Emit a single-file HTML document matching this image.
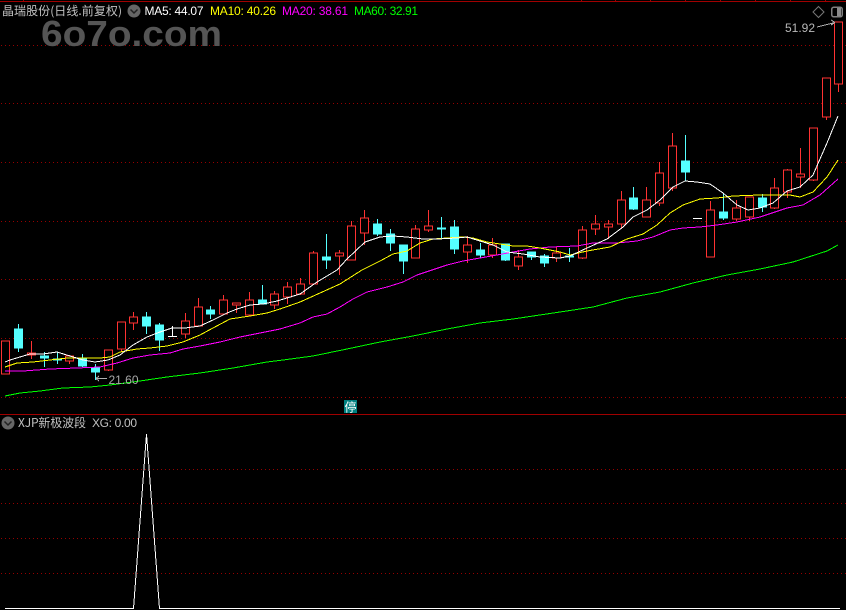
<!DOCTYPE html>
<html lang="zh">
<head>
<meta charset="utf-8">
<title>晶瑞股份</title>
<style>
html,body{margin:0;padding:0;background:#000;width:846px;height:610px;overflow:hidden}
svg{display:block}
text{font-family:"Liberation Sans","WenQuanYi Zen Hei","Noto Sans CJK SC",sans-serif;font-size:12px}
.c{font-family:"WenQuanYi Zen Hei","Noto Sans CJK SC","Liberation Sans",sans-serif}
</style>
</head>
<body>
<svg width="846" height="610" viewBox="0 0 846 610" xmlns="http://www.w3.org/2000/svg">
<defs>
<pattern id="d" x="0" y="0" width="4" height="1" patternUnits="userSpaceOnUse"><rect x="1" y="0" width="1" height="1" fill="#960000" shape-rendering="crispEdges"/></pattern>
</defs>
<rect width="846" height="610" fill="#000"/>
<g shape-rendering="crispEdges">
<path d="M0 1.5H846M23.5 0V1M581.5 0V1M615.5 0V1M650.5 0V1M685.5 0V1M720.5 0V1M755.5 0V1M790.5 0V1M825.5 0V1M0 414.5H846" stroke="#a00000" fill="none"/>
<g fill="url(#d)">
<rect x="0" y="45" width="846" height="1"/>
<rect x="0" y="103" width="846" height="1"/>
<rect x="0" y="162" width="846" height="1"/>
<rect x="0" y="221" width="846" height="1"/>
<rect x="0" y="279" width="846" height="1"/>
<rect x="0" y="338" width="846" height="1"/>
<rect x="0" y="397" width="846" height="1"/>
<rect x="0" y="469" width="846" height="1"/>
<rect x="0" y="503" width="846" height="1"/>
<rect x="0" y="538" width="846" height="1"/>
<rect x="0" y="573" width="846" height="1"/>
</g>
</g>
<text x="41" y="46" fill="#555" textLength="181" lengthAdjust="spacingAndGlyphs" style="font-size:36px;font-weight:bold">6o7o.com</text>

<g shape-rendering="crispEdges" stroke-width="1">
<path stroke="#ff3232" fill="none" d="M31.5 341V359M69.5 355V364M108.5 350V371M121.5 322V352M133.5 312V330M185.5 313V338M198.5 298V327M223.5 295V314M236.5 303V313M249.5 292V316M274.5 291V309M287.5 282V304M300.5 278V295M313.5 251V285M339.5 250V275M351.5 221V260M364.5 210V245M415.5 225V258M428.5 210V232M467.5 236V263M492.5 238V258M518.5 250V270M556.5 247V262M582.5 226V259M595.5 215V235M608.5 220V239M621.5 191V229M646.5 187V217M659.5 162V206M672.5 133V191M710.5 201V257M736.5 200V221M749.5 197V221M774.5 178V209M787.5 169V198M800.5 148V188M813.5 128V181M826.5 78V120M838.5 22V92"/>
<path stroke="#ff3232" fill="#000" d="M1.5 341h8v33h-8zM27.5 353h8v2h-8zM65.5 356h8v5h-8zM104.5 350h8v20h-8zM117.5 322h8v27h-8zM129.5 317h8v6h-8zM181.5 321h8v13h-8zM194.5 307h8v19h-8zM219.5 300h8v14h-8zM232.5 303h8v2h-8zM245.5 300h8v15h-8zM270.5 294h8v11h-8zM283.5 287h8v10h-8zM296.5 284h8v10h-8zM309.5 253h8v31h-8zM335.5 253h8v3h-8zM347.5 226h8v34h-8zM360.5 218h8v15h-8zM411.5 229h8v29h-8zM424.5 226h8v4h-8zM463.5 245h8v7h-8zM488.5 245h8v10h-8zM514.5 257h8v9h-8zM552.5 253h8v5h-8zM578.5 230h8v28h-8zM591.5 224h8v5h-8zM604.5 224h8v3h-8zM617.5 200h8v24h-8zM642.5 200h8v17h-8zM655.5 173h8v30h-8zM668.5 146h8v42h-8zM706.5 210h8v47h-8zM732.5 208h8v11h-8zM745.5 197h8v20h-8zM770.5 188h8v20h-8zM783.5 170h8v22h-8zM796.5 174h8v3h-8zM809.5 128h8v52h-8zM822.5 78h8v39h-8zM834.5 22h8v62h-8z"/>
<path stroke="#55ffff" fill="none" d="M18.5 324V352M44.5 352V367M57.5 352V364M82.5 354V367M95.5 364V380M146.5 312V334M159.5 323V351M210.5 306V319M262.5 285V304M326.5 234V269M377.5 219V236M390.5 229V251M403.5 245V274M441.5 217V239M454.5 220V254M480.5 243V258M505.5 244V261M531.5 252V260M544.5 254V267M569.5 248V262M633.5 187V210M685.5 135V181M723.5 193V220M762.5 194V212"/>
<path stroke="#55ffff" fill="#55ffff" d="M14.5 329h8v19h-8zM40.5 356h8v2h-8zM53.5 359h8v1h-8zM78.5 359h8v7h-8zM91.5 368h8v4h-8zM142.5 317h8v9h-8zM155.5 325h8v15h-8zM206.5 310h8v4h-8zM258.5 300h8v4h-8zM322.5 257h8v3h-8zM373.5 224h8v10h-8zM386.5 234h8v9h-8zM399.5 245h8v16h-8zM437.5 228h8v1h-8zM450.5 227h8v22h-8zM476.5 250h8v5h-8zM501.5 244h8v16h-8zM527.5 252h8v5h-8zM540.5 256h8v7h-8zM565.5 256h8v1h-8zM629.5 198h8v11h-8zM681.5 161h8v11h-8zM719.5 212h8v6h-8zM758.5 198h8v9h-8z"/>
<path stroke="#fff" fill="none" d="M172.5 326V336M168 336.5H177M693 218.5H702"/>

<polyline fill="none" stroke="#00ff00" points="5,396 20,393 40,391 63,388 90,387 110,385 133,382 167,377 200,373 233,368 267,362 283,360 313,356 347,349 380,342 413,336 447,329 480,323 513,319 560,312 593,307 627,298 660,292 693,283 727,275 760,269 793,262 827,251 838,245"/>
<polyline fill="none" stroke="#ff00ff" points="5,371 23,371 50,369 77,368 100,367 117,363 133,358 150,355 170,353 183,349 200,346 220,342 240,337 260,333 280,329 300,323 313,317 327,314 340,307 353,299 367,292 387,287 403,282 417,275 432,270 447,265 463,261 480,258 497,255 513,252 530,249 550,247 577,246 593,243 617,243 637,241 653,237 670,230 683,228 700,227 717,225 737,222 760,217 787,208 803,205 820,195 838,179"/>
<polyline fill="none" stroke="#ffff00" points="5,367 17,363 33,362 50,360 67,358 100,358 110,357 120,352 137,349 150,348 167,346 183,342 200,335 213,328 230,319 250,316 267,313 280,309 300,302 320,293 340,284 362,270 380,261 393,254 407,251 420,243 433,239 447,238 463,237 473,238 487,242 500,244 513,246 527,246 540,248 560,252 570,255 587,251 610,247 627,239 643,234 657,225 670,213 683,205 700,199 717,198 733,196 760,195 790,195 800,197 813,192 827,177 838,160"/>
<polyline fill="none" stroke="#ffffff" points="5,362 10,360 20,357 30,354 43,354 57,352 70,356 83,360 95,362 108,360 120,355 133,345 147,337 160,332 172,328 185,328 200,326 213,320 227,313 237,309 250,305 263,304 277,301 287,298 300,294 317,282 337,270 347,259 365,242 380,237 393,236 407,237 423,239 437,239 457,238 467,237 480,241 493,245 507,252 523,254 540,257 560,258 570,256 587,248 607,239 623,227 633,217 647,210 660,200 673,187 685,181 697,182 710,184 723,193 737,205 748,210 760,208 773,203 787,191 800,187 813,175 827,143 838,116"/>

<polyline fill="none" stroke="#ffffff" points="5,608.5 133.5,608.5 146.5,434 159.5,608.5 840,608.5"/>

<path fill="none" stroke="#b0b0b0" d="M96 378.5H107M96 378.5L99 376M96 378.5L99 381M817 27L835 22.5M835 22.5L831 20M835 22.5L831 25"/>
<rect x="344" y="400" width="13" height="13" fill="#008080"/>
</g>

<text class="c" x="2" y="15" fill="#c0c0c0" textLength="120" lengthAdjust="spacing">晶瑞股份(日线.前复权)</text>
<text x="144.5" y="15" fill="#ffffff" textLength="59">MA5: 44.07</text>
<text x="210" y="15" fill="#ffff00" textLength="66">MA10: 40.26</text>
<text x="282" y="15" fill="#ff00ff" textLength="66">MA20: 38.61</text>
<text x="354" y="15" fill="#00ff00" textLength="64">MA60: 32.91</text>

<circle cx="134" cy="11" r="6.5" fill="#666"/>
<path d="M130.5 9.5L134 13L137.5 9.5" fill="none" stroke="#222" stroke-width="1.5"/>
<circle cx="8" cy="423" r="6.5" fill="#666"/>
<path d="M4.5 421.5L8 425L11.5 421.5" fill="none" stroke="#222" stroke-width="1.5"/>

<path d="M818.5 6.5L824 12L818.5 17.5L813 12Z" fill="none" stroke="#777"/>
<rect x="831.75" y="7.25" width="10.5" height="9.5" rx="2" fill="none" stroke="#808080" stroke-width="1.5"/>
<rect x="837" y="8" width="4" height="8" fill="#8a8a8a"/>

<text x="108.5" y="384" fill="#a8a8a8" textLength="30">21.60</text>
<text x="785" y="32" fill="#b8b8b8" textLength="30">51.92</text>
<text class="c" x="344.5" y="411.5" fill="#ffffff">停</text>
<text class="c" x="18" y="427" fill="#c0c0c0" textLength="68" lengthAdjust="spacing">XJP新极波段</text>
<text x="92" y="427" fill="#c0c0c0" textLength="45">XG: 0.00</text>
</svg>
</body>
</html>
